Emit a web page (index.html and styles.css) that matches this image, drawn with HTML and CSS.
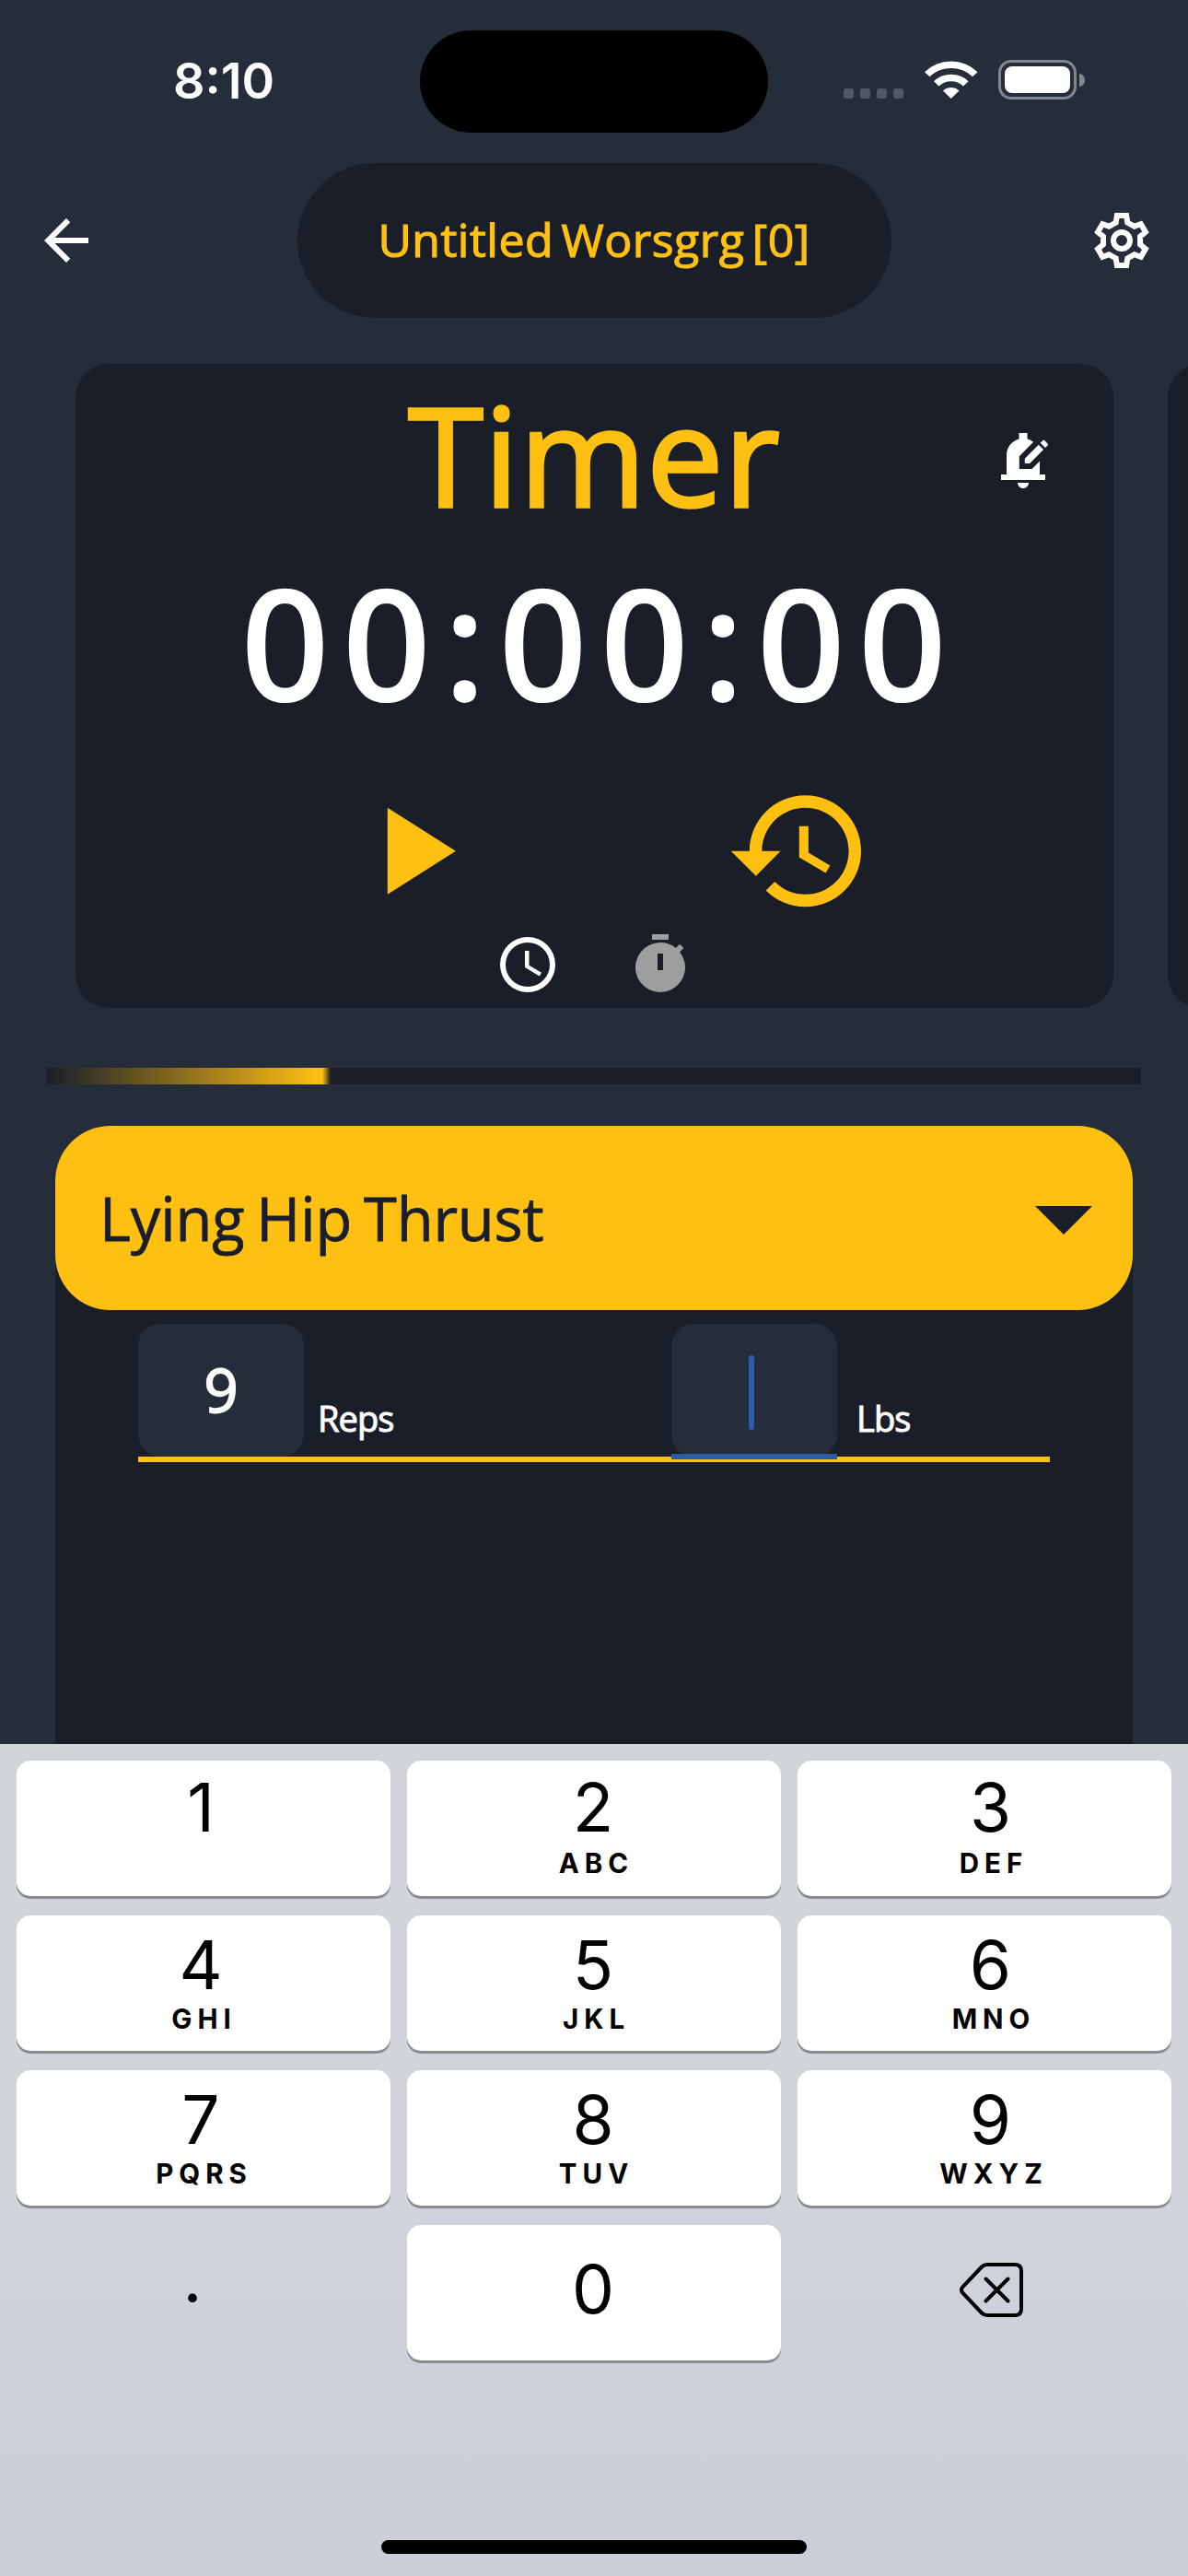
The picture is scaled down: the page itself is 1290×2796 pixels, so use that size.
FILE: index.html
```html
<!DOCTYPE html>
<html lang="en">
<head>
<meta charset="utf-8">
<title>Workout</title>
<link rel="stylesheet" href="styles.css">
</head>
<body>
<div class="screen">
  <header class="status">
    <span class="clock">8:10</span>
    <span class="island"></span>
    <span class="indicators">
      <span class="signal"><i></i><i></i><i></i><i></i></span>
      <svg class="wifi" viewBox="0 0 58 42"><path d="M0 13.3A41 41 0 0 1 57.5 13.3L52 18.3A33.5 33.5 0 0 0 5.500 18.300Z"/><path d="M10 23.200A27 27 0 0 1 47.500 23.200L42 28.500A19.500 19.500 0 0 0 15.500 28.500Z"/><path d="M20 33.500A13 13 0 0 1 37.500 33.500L28.700 42Z"/></svg>
      <span class="battery"><span class="cell"><span class="charge"></span></span><span class="nub"></span></span>
    </span>
  </header>

  <nav class="topbar">
    <svg class="icon" viewBox="0 0 24 24"><path d="M20 11H7.830l5.590-5.590L12 4l-8 8 8 8 1.410-1.410L7.830 13H20z"/></svg>
    <div class="title"><span>Untitled Worsgrg [0]</span></div>
    <svg class="icon" viewBox="0 0 24 24"><g class="gear" transform="translate(12 12)"><path d="M-2.100-6.500L-1.700-9H1.700L2.100-6.500 4.580-5.070 6.940-5.970 8.640-3.030 6.680-1.430V1.430L8.640 3.030 6.940 5.970 4.580 5.070 2.100 6.500 1.700 9H-1.700L-2.100 6.500-4.580 5.070-6.940 5.970-8.640 3.030-6.680 1.430V-1.430L-8.640-3.030-6.940-5.970-4.580-5.070z"/><circle r="3"/></g></svg>
  </nav>

  <section class="carousel">
    <article class="card">
      <h1 class="heading">Timer</h1>
      <svg class="icon bell" viewBox="0 0 24 24"><path d="M17.580 6.250l1.770 1.770L14.370 13H12.600v-1.770l4.980-4.980zm3.270-.44l-1.060-1.060c-.2-.2-.51-.2-.71 0l-.85.85L20 7.370l.85-.85c.2-.2.2-.51 0-.71zM18 12.200V17h2v2H4v-2h2v-7c0-2.790 1.910-5.140 4.500-5.800V2h3v2.200c.82.210 1.570.59 2.210 1.090L10.600 10.400V15h4.600L18 12.200zM10 20h4c0 1.100-.9 2-2 2s-2-.9-2-2z"/></svg>
      <div class="digits">00:00:00</div>
      <div class="controls">
        <svg class="big" viewBox="0 0 24 24"><path d="M8 5v14l11-7z"/></svg>
        <svg class="big" viewBox="0 0 24 24"><path d="M13 3c-4.970 0-9 4.030-9 9H1l4.030 4.030L9 12H6c0-3.870 3.130-7 7-7s7 3.130 7 7-3.130 7-7 7c-1.930 0-3.680-.79-4.940-2.060l-1.420 1.420C8.270 19.990 10.510 21 13 21c4.970 0 9-4.030 9-9s-4.030-9-9-9zm-1 5v5l4.280 2.540.72-1.210-3.500-2.080V8H12z"/></svg>
      </div>
      <div class="modes">
        <svg class="icon" viewBox="0 0 24 24"><path d="M12 2a10 10 0 1 0 0 20 10 10 0 0 0 0-20zm0 18a8 8 0 1 1 0-16 8 8 0 0 1 0 16zm.5-13H11v6l5.250 3.150.75-1.230-4.500-2.670z"/></svg>
        <svg class="icon muted" viewBox="0 0 24 24"><path d="M15 1H9v2h6V1zm-4 13h2V8h-2v6zm8.030-6.610 1.420-1.420c-.43-.51-.9-.99-1.410-1.410l-1.420 1.420A8.960 8.960 0 0 0 12 4a9 9 0 1 0 7.030 3.390z" fill-rule="evenodd"/></svg>
      </div>
    </article>
    <article class="card"></article>
  </section>

  <div class="progress"><div class="bar"></div></div>

  <section class="panel">
    <div class="picker"><span>Lying Hip Thrust</span><svg class="caret" viewBox="0 0 62 31"><path d="M0 0h62L31 31z"/></svg></div>
    <div class="sets">
      <div class="field"><span class="box">9</span><span class="unit">Reps</span></div>
      <div class="field"><span class="box active"><i class="cursor"></i></span><span class="unit lbs">Lbs</span></div>
    </div>
  </section>

  <section class="keyboard">
    <div class="keys">
      <div class="key first c1"><b>1</b></div>
      <div class="key first"><b>2</b><small>ABC</small></div>
      <div class="key first c3"><b>3</b><small>DEF</small></div>
      <div class="key c1"><b>4</b><small>GHI</small></div>
      <div class="key"><b>5</b><small>JKL</small></div>
      <div class="key c3"><b>6</b><small>MNO</small></div>
      <div class="key c1"><b>7</b><small>PQRS</small></div>
      <div class="key"><b>8</b><small>TUV</small></div>
      <div class="key c3"><b>9</b><small>WXYZ</small></div>
      <div class="key plain point"><b>.</b></div>
      <div class="key zero"><b>0</b></div>
      <div class="key plain"><svg class="erase" viewBox="0 0 69 59"><path d="M30 2h30q7 0 7 7v41q0 7-7 7H30q-3.500 0-6-2.500L3.500 33q-3-3.500 0-7L24 4.500Q26.500 2 30 2zM28.500 17.500l24 24m0-24l-24 24"/></svg></div>
    </div>
    <div class="home"></div>
  </section>
</div>
</body>
</html>
```
FILE: styles.css
```css
* { box-sizing: border-box; }

body {
  margin: 0;
  background: #262d3a;
  color: #fff;
  font-family: "Open Sans", "Noto Sans", sans-serif;
}

.screen {
  width: 1290px;
  height: 2796px;
  display: flex;
  flex-direction: column;
  overflow: hidden;
}

svg { display: block; fill: currentColor; flex: none; }
.icon { width: 72px; height: 72px; }

/* status bar */
.status {
  height: 177px;
  padding-top: 33px;
  display: grid;
  grid-template-columns: 456px 378px 456px;
  flex: none;
}
.clock {
  padding-left: 188px;
  font: 600 54px/109px Inter, sans-serif;
}
.island { height: 111px; border-radius: 56px; background: #000; }
.indicators { display: flex; padding: 32px 0 0 82px; }
.signal { display: flex; gap: 7px; padding-top: 31px; }
.signal i { width: 11px; height: 11px; border-radius: 3px; background: #525761; }
.wifi { width: 58px; height: 42px; margin-left: 22.500px; }
.battery { display: flex; align-items: center; gap: 3px; height: 43px; margin-left: 22.500px; }
.cell { width: 85px; height: 43px; padding: 4px; border: 3px solid #83868d; border-radius: 14px; }
.charge { display: block; height: 29px; border-radius: 8px; background: #fff; }
.nub { width: 6px; height: 14px; border-radius: 0 6px 6px 0 / 0 7px 7px 0; background: #83868d; }

/* top bar */
.topbar {
  height: 168px;
  padding: 0 36px;
  display: flex;
  align-items: center;
  justify-content: space-between;
  flex: none;
}
.title {
  width: 645px;
  height: 168px;
  border-radius: 84px;
  background: #1a1e29;
  color: #ffc012;
  font-size: 50px;
  line-height: 166px;
  text-align: center;
  white-space: nowrap;
  letter-spacing: 0.500px;
  word-spacing: -5px;
  -webkit-text-stroke: 1.200px currentColor;
}
.gear { fill: none; stroke: currentColor; stroke-width: 2; }

/* timer carousel */
.carousel { display: flex; gap: 59px; margin: 50px 0 0 82px; flex: none; }
.card {
  position: relative;
  width: 1127px;
  height: 699px;
  border-radius: 36px;
  background: #1a1e29;
  flex: none;
}
.heading {
  margin: 0;
  padding-top: 20px;
  color: #ffc012;
  font-size: 148px;
  font-weight: 400;
  line-height: 156px;
  letter-spacing: 1px;
  text-align: center;
  -webkit-text-stroke: 3.500px currentColor;
}
.bell { position: absolute; left: 993px; top: 69px; }
.digits {
  margin-top: 30px;
  font-size: 169px;
  font-weight: 600;
  line-height: 190px;
  letter-spacing: 13.500px;
  text-indent: 12px;
  text-align: center;
}
.controls { display: flex; justify-content: space-between; padding: 0 261px 0 285px; margin-top: 52px; color: #ffc012; }
.big { width: 161.500px; height: 161.500px; }
.modes { display: flex; gap: 72px; margin: 6px 0 0 455px; }
.muted { color: #9e9e9e; }

/* workout progress */
.progress { height: 18px; margin: 65px 51px 0; background: #1a1e29; flex: none; }
.bar { width: 308px; height: 18px; background: linear-gradient(90deg, #1a1e29 0, #ffc012 297px, #ffc012 299px, #1a1e29 308px); }

/* exercise panel */
.panel { height: 671px; margin: 45px 60px 0; flex: none; background: linear-gradient(#262d3a 100px, #1a1e29 100px); }
.picker {
  height: 200px;
  padding: 0 44px 0 48px;
  border-radius: 60px;
  background: #ffc012;
  color: #1a1e29;
  display: flex;
  align-items: center;
  justify-content: space-between;
  font-size: 65px;
  line-height: 196px;
  letter-spacing: -0.100px;
  word-spacing: -4px;
  -webkit-text-stroke: 0.800px currentColor;
}
.caret { width: 62px; height: 31px; margin-top: 5px; }
.sets {
  height: 165px;
  margin: 0 90px;
  padding-top: 15px;
  border-bottom: 6px solid #ffc012;
  display: grid;
  grid-template-columns: 579px 1fr;
}
.field { display: flex; }
.box {
  position: relative;
  width: 180px;
  height: 144px;
  border-radius: 24px;
  background: #262d3a;
  font-size: 65px;
  line-height: 143px;
  text-align: center;
  -webkit-text-stroke: 1.800px currentColor;
}
.active::after { content: ""; position: absolute; left: 0; right: 0; top: 141px; height: 6px; background: #2a5da8; }
.cursor { display: block; width: 6px; height: 81px; margin: 34px 0 0 84px; border-radius: 3px; background: #2a5da8; }
.unit { padding: 77px 0 0 15px; font-size: 38px; line-height: 50px; letter-spacing: -0.900px; -webkit-text-stroke: 1px currentColor; }
.unit.lbs { padding-left: 21px; }

/* numeric keypad */
.keyboard {
  height: 903px;
  padding: 18px 18px 0;
  background: linear-gradient(#d1d4d9 0, #d1d4d9 470px, #cfd2db 560px, #cbced7 100%);
  color: #000;
  font-family: Inter, sans-serif;
  flex: none;
}
.keys { display: grid; grid-template-columns: repeat(3, 406px); grid-auto-rows: 147px; gap: 21px 18px; }
.key {
  padding-top: 16px;
  border-radius: 15px;
  background: #fff;
  box-shadow: 0 3px 0 #898a8d;
  display: flex;
  flex-direction: column;
  align-items: center;
}
.key b { height: 76px; font-size: 73px; font-weight: 400; line-height: 75px; margin-right: 2px; }
.key small { height: 40px; font-size: 29.500px; font-weight: 700; line-height: 40px; letter-spacing: 6px; margin-right: -5px; }
.first { padding-top: 13px; }
.first small { margin-top: 2px; }
.c1 { padding-right: 4px; }
.c3 { padding-left: 15px; }
.zero { padding-top: 32px; }
.plain { background: none; box-shadow: none; }
.point { padding: 20px 22px 0 0; }
.erase { width: 69px; height: 59px; margin: 25px 0 0 15px; fill: none; stroke: #000; stroke-width: 4; stroke-linecap: round; }
.home { width: 462px; height: 15px; margin: 195px auto 0; border-radius: 8px; background: #000; }
```
